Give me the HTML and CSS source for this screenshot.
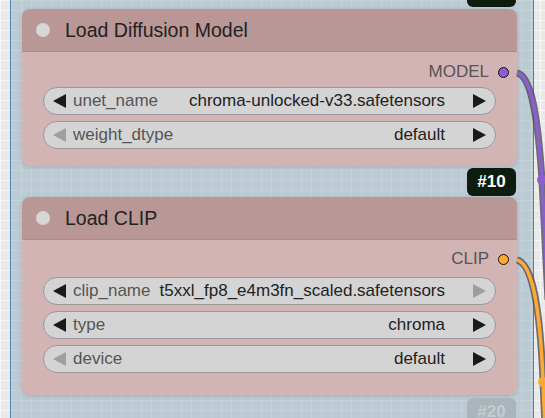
FILE: index.html
```html
<!DOCTYPE html>
<html lang="en">
<head>
  <meta charset="UTF-8" />
  <title>Chroma loaders</title>
  <link rel="stylesheet" href="styles.css">
</head>
<body>
  <div class="canvas">
    <div class="group">
      <div class="badge badge-stub"></div>

      <div class="node node-unet">
        <div class="node-title"><span class="title-dot"></span>Load Diffusion Model</div>
        <div class="node-body">
          <div class="output">MODEL <span class="slot slot-model"></span></div>
          <div class="widgets">
            <div class="widget">
              <svg class="arrow" viewBox="0 0 13 14"><polygon points="13,0 13,14 0,7" /></svg>
              <span class="w-label">unet_name</span>
              <span class="w-value">chroma-unlocked-v33.safetensors</span>
              <svg class="arrow" viewBox="0 0 13 14"><polygon points="0,0 0,14 13,7" /></svg>
            </div>
            <div class="widget">
              <svg class="arrow off" viewBox="0 0 13 14"><polygon points="13,0 13,14 0,7" /></svg>
              <span class="w-label">weight_dtype</span>
              <span class="w-value">default</span>
              <svg class="arrow" viewBox="0 0 13 14"><polygon points="0,0 0,14 13,7" /></svg>
            </div>
          </div>
        </div>
      </div>

      <div class="badge badge-id">#10</div>

      <div class="node node-clip">
        <div class="node-title"><span class="title-dot"></span>Load CLIP</div>
        <div class="node-body">
          <div class="output">CLIP <span class="slot slot-clip"></span></div>
          <div class="widgets">
            <div class="widget">
              <svg class="arrow" viewBox="0 0 13 14"><polygon points="13,0 13,14 0,7" /></svg>
              <span class="w-label">clip_name</span>
              <span class="w-value">t5xxl_fp8_e4m3fn_scaled.safetensors</span>
              <svg class="arrow off" viewBox="0 0 13 14"><polygon points="0,0 0,14 13,7" /></svg>
            </div>
            <div class="widget">
              <svg class="arrow" viewBox="0 0 13 14"><polygon points="13,0 13,14 0,7" /></svg>
              <span class="w-label">type</span>
              <span class="w-value">chroma</span>
              <svg class="arrow" viewBox="0 0 13 14"><polygon points="0,0 0,14 13,7" /></svg>
            </div>
            <div class="widget">
              <svg class="arrow off" viewBox="0 0 13 14"><polygon points="13,0 13,14 0,7" /></svg>
              <span class="w-label">device</span>
              <span class="w-value">default</span>
              <svg class="arrow" viewBox="0 0 13 14"><polygon points="0,0 0,14 13,7" /></svg>
            </div>
          </div>
        </div>
      </div>

      <div class="badge badge-id faded">#20</div>
    </div>

    <!-- links between nodes (they leave from the node edge) -->
    <svg class="links" width="545" height="418" viewBox="0 0 545 418">
      <path class="link-shadow" d="M517 73 C532 76 538 120 542 180 L548 300" />
      <path class="link-model" d="M517 73 C532 76 538 120 542 180 L548 300" />
      <circle class="link-model-dot" cx="542" cy="180" r="5" />
      <path class="link-shadow" d="M517 260 C533 264 540 310 543 380 L545 430" />
      <path class="link-clip" d="M517 260 C533 264 540 310 543 380 L545 430" />
      <circle class="link-clip-dot" cx="543" cy="382" r="5" />
    </svg>
  </div>
</body>
</html>
```

FILE: styles.css
```css
body {
  margin: 0;
  padding: 0;
  font-family: 'Liberation Sans', Arial, sans-serif;
  background: #e8e8e8;
}
.canvas {
  position: relative;
  width: 545px;
  height: 418px;
  overflow: hidden;
  background-color: #e9e9e9;
  background-image:
    linear-gradient(rgba(255, 255, 255, 0.6) 1px, transparent 1px),
    linear-gradient(90deg, rgba(255, 255, 255, 0.6) 1px, transparent 1px);
  background-size: 10px 10px;
}
.group {
  box-sizing: border-box;
  margin-left: 10px;
  width: 524px;
  height: 418px;
  padding: 0 16px 0 11px;
  border-left: 1px solid #4c7fae;
  border-right: 1px solid #4c7fae;
  background-color: #bccad3;
  background-image:
    linear-gradient(rgba(255, 255, 255, 0.13) 1px, transparent 1px),
    linear-gradient(90deg, rgba(255, 255, 255, 0.13) 1px, transparent 1px);
  background-size: 10px 10px;
  display: flex;
  flex-direction: column;
  overflow: hidden;
}
.group > * {
  flex-shrink: 0;
}
.badge {
  align-self: flex-end;
  width: 49px;
  height: 28px;
  margin-right: 1px;
  border-radius: 6px;
  background: #0c1d10;
  color: #fff;
  font-weight: bold;
  font-size: 17px;
  display: flex;
  align-items: center;
  justify-content: center;
}
.badge-stub {
  height: 7px;
  border-radius: 0 0 6px 6px;
}
.badge-id {
  margin-top: 2px;
}
.badge.faded {
  margin-top: 3px;
  background: #a9b5ba;
  color: #c3cdd1;
}
.node {
  border-radius: 8px;
  overflow: hidden;
  background: #d3b4b5;
  box-shadow: 0 1px 4px rgba(0, 0, 0, 0.15);
}
.node-unet {
  margin-top: 2px;
}
.node-clip {
  margin-top: 1px;
}
.node-title {
  height: 43px;
  display: flex;
  align-items: center;
  padding-left: 14px;
  background: #b99796;
  border-bottom: 1px solid #b08b8b;
  box-sizing: border-box;
  color: #222;
  font-size: 19.5px;
}
.title-dot {
  width: 14px;
  height: 14px;
  border-radius: 50%;
  background: #d6d6d6;
  margin-right: 15px;
}
.node-body {
  padding: 10px 21px 17px;
}
.node-clip .node-body {
  padding-top: 9px;
  padding-bottom: 22px;
}
.output {
  height: 20px;
  display: flex;
  align-items: center;
  justify-content: flex-end;
  margin-right: -13px;
  color: #555;
  font-size: 17px;
}
.slot {
  width: 9px;
  height: 9px;
  margin-left: 9px;
  border-radius: 50%;
  border: 1px solid #111;
}
.slot-model {
  background: #8b5fcf;
}
.slot-clip {
  background: #ffa931;
}
.widgets {
  margin-top: 5px;
  display: flex;
  flex-direction: column;
  gap: 6px;
}
.node-clip .widgets {
  margin-top: 8px;
}
.widget {
  box-sizing: border-box;
  height: 28px;
  display: flex;
  align-items: center;
  padding: 0 9px;
  border: 1.5px solid #999;
  border-radius: 14px;
  background: #d4d4d4;
  font-size: 17px;
}
.arrow {
  width: 13px;
  height: 14px;
  fill: #1a1a1a;
  flex-shrink: 0;
}
.arrow.off {
  fill: #9e9e9e;
}
.w-label {
  margin-left: 7px;
  color: #555;
}
.w-value {
  margin-left: auto;
  margin-right: 28px;
  color: #222;
  white-space: nowrap;
}
.links {
  position: absolute;
  left: 0;
  top: 0;
  fill: none;
}
.link-shadow {
  stroke: #4a4f55;
  stroke-width: 7;
  opacity: 0.8;
}
.link-model {
  stroke: #8b5fcf;
  stroke-width: 3.5;
}
.link-clip {
  stroke: #ffa931;
  stroke-width: 3.5;
}
.link-model-dot {
  fill: #8b5fcf;
}
.link-clip-dot {
  fill: #ffa931;
}
```
